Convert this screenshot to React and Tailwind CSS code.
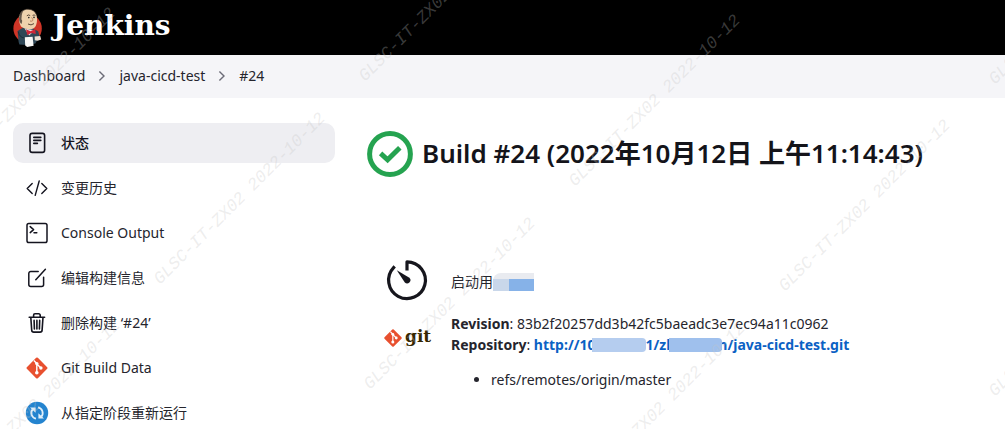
import React from 'react';

const StatusIcon = () => (
    <svg viewBox="0 0 24 24" className="size-6" fill="none" stroke="#14141f" strokeWidth="1.6" strokeLinecap="round" aria-hidden="true">
        <rect x="5" y="2.4" width="14.6" height="19" rx="2.2" />
        <path d="M8.8 6.4h7M8.8 9.4h7M8.8 12.4h3.6" />
    </svg>
);

const ChangesIcon = () => (
    <svg viewBox="0 0 24 24" className="size-6" fill="none" stroke="#14141f" strokeWidth="1.4" strokeLinecap="round" strokeLinejoin="round" aria-hidden="true">
        <path d="M7.2 7.4L2.2 12.4l5 5M16.8 7.4l5 5-5 5M14.2 5l-4 14.4" />
    </svg>
);

const ConsoleIcon = () => (
    <svg viewBox="0 0 24 24" className="size-6" fill="none" stroke="#14141f" strokeWidth="1.5" strokeLinecap="round" strokeLinejoin="round" aria-hidden="true">
        <rect x="2" y="2.4" width="20" height="19.2" rx="1.8" />
        <path d="M5.2 5.6l3.4 3-3.4 3M9 11.8h2.8" />
    </svg>
);

const EditIcon = () => (
    <svg viewBox="0 0 24 24" className="size-6" fill="none" stroke="#14141f" strokeWidth="1.5" strokeLinecap="round" strokeLinejoin="round" aria-hidden="true">
        <path d="M13.2 5.4H5.8a2 2 0 0 0-2 2v11.2a2 2 0 0 0 2 2h10.8a2 2 0 0 0 2-2v-7.4" />
        <path d="M20.4 3.2l-9.6 10.6" />
    </svg>
);

const TrashIcon = () => (
    <svg viewBox="0 0 24 24" className="size-6" fill="none" stroke="#14141f" strokeWidth="1.6" strokeLinecap="round" strokeLinejoin="round" aria-hidden="true">
        <path d="M4.2 6.2h15.4M5.8 6.2l.9 12.9a2.1 2.1 0 0 0 2.1 2H15a2.1 2.1 0 0 0 2.1-2L18 6.2" />
        <path d="M8.6 6V4.2A1.4 1.4 0 0 1 10 2.8h3.8a1.4 1.4 0 0 1 1.4 1.4V6M9.1 9.4l.3 8.6M11.9 9.4V18M14.7 9.4l-.3 8.6" />
    </svg>
);

const GitMark = ({ className }) => (
    <svg viewBox="0 0 24 24" className={className} aria-hidden="true">
        <rect x="4.2" y="4.2" width="15.6" height="15.6" rx="1.2" transform="rotate(45 12 12)" fill="#e8502f" />
        <path d="M8.8 4.4L11.8 7.6V17M12 8l3.8 3.9" fill="none" stroke="#fff" strokeWidth="1.4" />
        <circle cx="11.8" cy="7.6" r="1.7" fill="#fff" />
        <circle cx="11.8" cy="16.8" r="1.8" fill="#fff" />
        <circle cx="15.9" cy="12" r="1.7" fill="#fff" />
    </svg>
);

const RestartIcon = () => (
    <svg viewBox="0 0 24 24" className="size-6" aria-hidden="true">
        <circle cx="12" cy="12" r="11.2" fill="#2484cf" />
        <g fill="none" stroke="#e0effa" strokeWidth="1.8">
            <path d="M11 17.6A5.7 5.7 0 0 1 7.6 8.4" />
            <path d="M13 6.4a5.7 5.7 0 0 1 3.4 9.2" />
        </g>
        <path d="M5 6.6h5.6v5.2zM19 17.4h-5.6v-5.2z" fill="#e0effa" />
    </svg>
);

const JenkinsLogo = () => (
    <svg viewBox="0 0 30 40" className="h-10 w-[30px]" aria-hidden="true">
        <ellipse cx="14.6" cy="20.5" rx="14.2" ry="14.4" fill="#cf3527" />
        <path d="M6.4 36.4c-1.2-2.6-1-6.4-1.4-8.4L4.6 23l5.6-3.4L20 20.4l5.2 2.8 1.4 5.4-2.2 3.4-2 3.6-8 1.4z" fill="#2f4756" />
        <path d="M8 18.6C6.4 15 5.4 11.6 6.2 8.2 7.2 3.8 10.6 1.2 15 1.2c4.8 0 8.2 3 8.8 7.2.6 4.2 0 7.4-1.2 9.8-1 2-3.4 3-5.6 3-3 0-6.4-.4-9-2.6z" fill="#eed2ad" />
        <path d="M6.8 14C5 9.8 7 4.2 10.4 2.8 8.4 6 8.8 9 8.4 11.4c1.2.4.8 3.6-.2 4.6z" fill="#66584b" />
        <path d="M6.4 7.8C7.8 3.4 11 1.2 15 1.2c4.4 0 7.4 2.4 8.6 5.8" fill="none" stroke="#3d332b" strokeWidth=".7" />
        <path d="M13.8 7.8q1.8-1.6 3.4-.2M19.6 7.4q1.6-1 2.8.2M15 16q3 2 6-.4" fill="none" stroke="#4c3a2d" strokeWidth=".9" />
        <circle cx="15.8" cy="9.6" r=".8" fill="#222" />
        <circle cx="21" cy="9.4" r=".8" fill="#222" />
        <path d="M18.6 9.4c1.4 2 2 3.2.2 3.8l-1.8-.2" fill="none" stroke="#b37c57" strokeWidth=".9" />
        <path d="M11.6 20.4l4.6 7.2 5.6-5.4-4.4-.8z" fill="#e3dfe0" />
        <path d="M13 21.2l4.4 2 4.8-2.2.6 5-4.4-1-4.2 2z" fill="#cf2638" />
        <path d="M11.8 29.2l7.8-.4 1 9-6.4 1.2-2-1.4z" fill="#f7f7f5" />
        <path d="M21.6 28.6l5.6-.6 1 3.4-3.6 1.4-2.8-.6z" fill="#e9dfd2" />
        <path d="M5.2 23.6q1.2 6 6.2 6.4" fill="none" stroke="#172831" strokeWidth=".8" />
    </svg>
);

const SuccessIcon = () => (
    <svg viewBox="0 0 48 48" className="size-12 shrink-0" fill="none" role="img" aria-label="Success">
        <circle cx="24" cy="24" r="20.4" stroke="#25a350" strokeWidth="5" />
        <path d="M14.6 23.4l7 6.4 12.2-12" stroke="#25a350" strokeWidth="5" />
    </svg>
);

const TimerIcon = () => (
    <svg viewBox="0 0 48 48" className="size-12" aria-hidden="true">
        <path d="M24 13V5.8a18.4 18.4 0 1 1-13.4 5.8" fill="none" stroke="#16161d" strokeWidth="3.2" strokeLinecap="square" strokeLinejoin="round" />
        <path d="M13.8 14.2l12.6 7.6a3.2 3.2 0 1 1-4.6 4.6z" fill="#16161d" />
    </svg>
);

const Chevron = () => (
    <svg viewBox="0 0 10 12" className="h-3 w-2.5" fill="none" stroke="#6c6c78" strokeWidth="1.4" aria-hidden="true">
        <path d="M2.4 1.4L7 6l-4.6 4.6" />
    </svg>
);

const crumbs = ['Dashboard', 'java-cicd-test', '#24'];

const tasks = [
    { label: '状态', icon: <StatusIcon />, active: true },
    { label: '变更历史', icon: <ChangesIcon /> },
    { label: 'Console Output', icon: <ConsoleIcon /> },
    { label: '编辑构建信息', icon: <EditIcon /> },
    { label: '删除构建 ‘#24’', icon: <TrashIcon /> },
    { label: 'Git Build Data', icon: <GitMark className="size-6" /> },
    { label: '从指定阶段重新运行', icon: <RestartIcon /> },
];

// start of each diagonal watermark line
const marks = [
    [-50, 180], [160, 285], [370, 390], [365, 82], [575, 187],
    [785, 292], [995, 397], [995, 85], [580, 495], [-45, 492],
];

const Watermark = () => (
    <svg className="pointer-events-none absolute inset-0 size-full" aria-hidden="true">
        {marks.map(([x, y]) => (
            <text
                key={`${x},${y}`}
                transform={`translate(${x} ${y}) rotate(-45)`}
                fontSize="17"
                className="fill-[#c4c4c4]/30 font-['Liberation_Mono',monospace] italic"
            >
                GLSC-IT-ZX02 2022-10-12
            </text>
        ))}
    </svg>
);

const Task = ({ label, icon, active }) => (
    <li>
        <a
            href="#task"
            className={`flex h-10 items-center gap-3 rounded-[10px] px-3 ${active ? 'bg-[#eeeef2] font-medium text-[#14141f]' : 'text-[#25252d]'}`}
        >
            {icon}
            {label}
        </a>
    </li>
);

const App = () => (
    <div className="relative min-h-screen overflow-hidden bg-white font-['Noto_Sans','Noto_Sans_CJK_SC',sans-serif] text-sm text-[#25252d]">
        <header className="flex h-[55px] items-center bg-black px-[13px]">
            <a href="#home" className="flex items-center gap-2.5 text-white">
                <JenkinsLogo />
                <span className="pb-1 font-['DejaVu_Serif',serif] text-[28px] font-bold leading-8">Jenkins</span>
            </a>
        </header>
        <nav className="h-[43px] bg-[#f5f5f8] px-[13px] pb-0.5" aria-label="Breadcrumb">
            <ol className="flex h-full items-center gap-3">
                {crumbs.map((crumb, i) => (
                    <li key={crumb} className="flex items-center gap-3">
                        {i > 0 && <Chevron />}
                        <a href="#crumb">{crumb}</a>
                    </li>
                ))}
            </ol>
        </nav>
        <div className="flex pt-[25px]">
            <aside className="w-1/3 shrink-0 pl-[13px]">
                <ul className="flex flex-col gap-[5px]">
                    {tasks.map((task) => (
                        <Task key={task.label} {...task} />
                    ))}
                </ul>
            </aside>
            <main className="min-w-0 flex-1 pl-[31px] pt-[7px]">
                <h1 className="flex items-center gap-2 whitespace-nowrap text-[26px] font-semibold text-[#14141a]">
                    <SuccessIcon />
                    Build #24 (2022年10月12日 上午11:14:43)
                </h1>
                <div className="mt-[78px] grid grid-cols-[48px_1fr] gap-x-5 pl-[17px]">
                    <TimerIcon />
                    <p className="flex items-center pt-1">
                        启动用
                        <span className="flex h-[18px] w-[41px] items-end rounded-tl-lg bg-[#e9ebf0]">
                            <span className="h-3 w-4 bg-[#c9d7ea]" />
                            <span className="h-3 flex-1 bg-[#86b2e8]" />
                        </span>
                    </p>
                    <div className="flex h-12 items-center gap-0.5 pt-5">
                        <GitMark className="size-5 shrink-0" />
                        <span className="pb-1 font-['DejaVu_Serif',serif] text-[17px] font-bold leading-6 text-[#362701]">git</span>
                    </div>
                    <div className="pt-[9px] leading-[21px]">
                        <p><b>Revision</b>: 83b2f20257dd3b42fc5baeadc3e7ec94a11c0962</p>
                        <p className="flex items-center whitespace-pre">
                            <b>Repository</b>:{' '}
                            <a href="#repo" className="flex items-center font-bold text-[#0b61c4]">
                                http://10
                                <span className="relative -ml-1 h-3.5 w-[54px] rounded-r-sm bg-[#b5cdef]" />
                                1/zh
                                <span className="relative -mr-1 -ml-1.5 h-3.5 w-[53px] rounded-r-sm bg-[#9fc0ed]" />
                                n/java-cicd-test.git
                            </a>
                        </p>
                        <ul className="mt-3.5 list-disc pl-10">
                            <li>refs/remotes/origin/master</li>
                        </ul>
                    </div>
                </div>
            </main>
        </div>
        <Watermark />
    </div>
);

export default App;
